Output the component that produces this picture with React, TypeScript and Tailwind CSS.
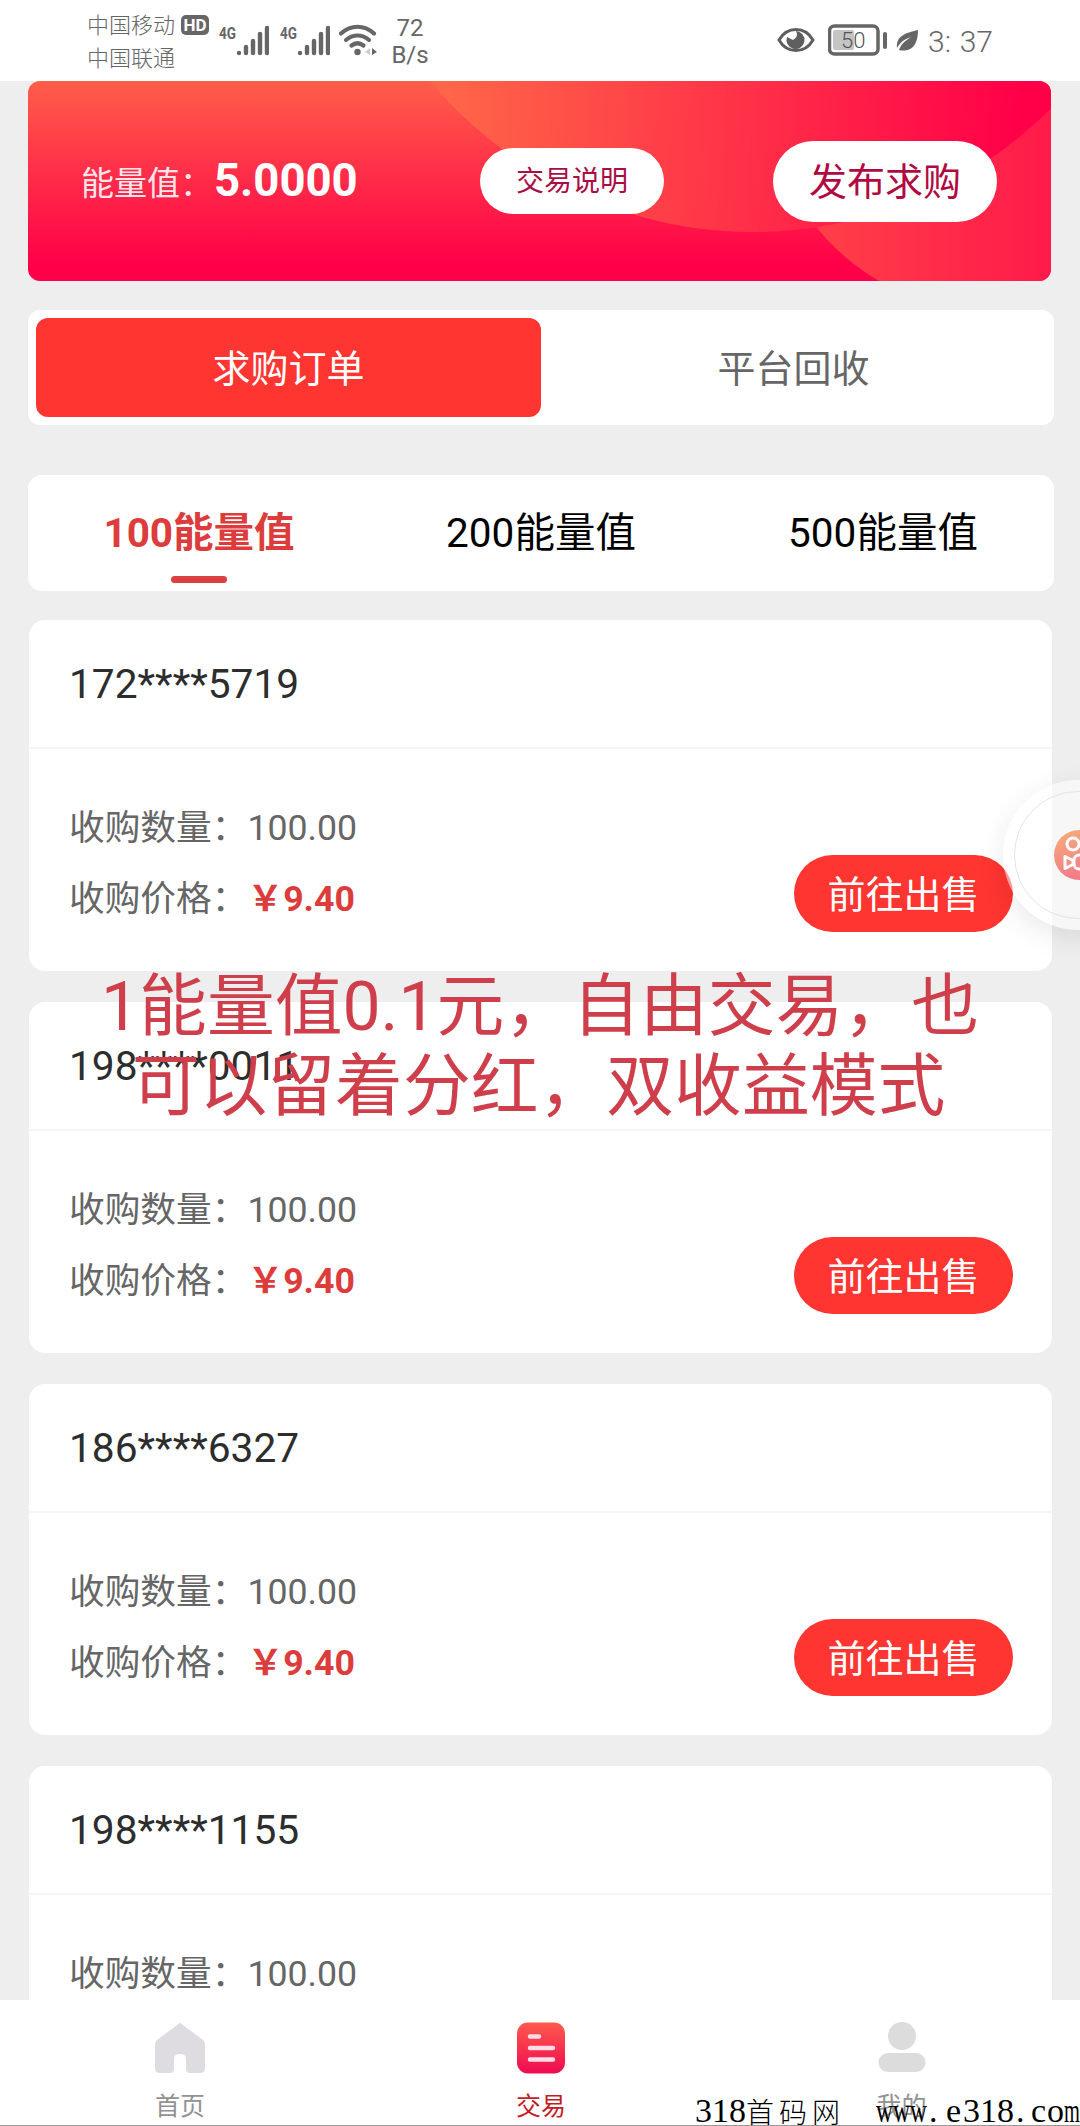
const orders = [
  { phone: "172****5719", amount: "100.00", price: "9.40" },
  { phone: "198****0011", amount: "100.00", price: "9.40" },
  { phone: "186****6327", amount: "100.00", price: "9.40" },
  { phone: "198****1155", amount: "100.00", price: "9.40" },
];

function Signal() {
  return (
    <svg className="w-[50px] h-[32px]" viewBox="0 0 50 32" fill="none">
      <text x="0" y="15" fontSize="17" fontWeight="700" fill="#666" textLength="17" lengthAdjust="spacingAndGlyphs">4G</text>
      <g stroke="#666" strokeWidth="4.4" strokeLinecap="round">
        <path d="M20 29v.1M27 23v6M34 17v12M41 10v19M48 4v25" />
      </g>
    </svg>
  );
}

function StatusBar() {
  return (
    <header className="h-[81px] shrink-0 bg-white flex justify-between pl-[87px] pr-[87px] text-[#666]">
      <div className="flex">
        <div className="w-[92px] pt-[9px] text-[22px] leading-[33px] font-light">
          <p>中国移动</p>
          <p>中国联通</p>
        </div>
        <div className="mt-[15px] ml-[2px] w-[28px] h-[20px] rounded-[5px] bg-[#666] text-white text-[17px] leading-[20px] font-bold text-center">HD</div>
        <div className="mt-[24px] ml-[10px]"><Signal /></div>
        <div className="mt-[24px] ml-[11px]"><Signal /></div>
        <svg className="mt-[24px] ml-[9px] w-[40px] h-[32px]" viewBox="0 0 40 32" fill="none" stroke="#666" strokeWidth="4.2">
          <path d="M2 9.5C12 .5 25 .5 35 9.5" strokeLinecap="round" />
          <path d="M7 16c7-6 16-6 23 0" strokeLinecap="round" />
          <path d="M12.500 21.500c4-3 8-3 12 0" strokeLinecap="round" />
          <circle cx="18.500" cy="28" r="3.200" fill="#666" stroke="none" />
          <path d="M31 24v7l-5-3z" fill="#ccc" stroke="none" />
          <path d="M33 24v7l5-3z" fill="#666" stroke="none" />
        </svg>
        <div className="mt-[15px] ml-[11px] w-[40px] text-center text-[24px] leading-[27px]">
          <p>72</p>
          <p>B/s</p>
        </div>
      </div>
      <div className="flex">
        <svg className="mt-[27px] -ml-[1px] w-[38px] h-[26px]" viewBox="0 0 38 26">
          <path d="M2 13C10-1 28-1 36 13 28 27 10 27 2 13z" fill="none" stroke="#5f5f5f" strokeWidth="3" />
          <path d="M19 4a9 9 0 1 1-9 6l6 3q6-3 3-9z" fill="#5f5f5f" />
        </svg>
        <svg className="mt-[24px] ml-[13px] w-[62px] h-[32px]" viewBox="0 0 62 32">
          <rect x="1.500" y="2" width="48.500" height="28" rx="5" fill="none" stroke="#666" strokeWidth="3.500" />
          <rect x="5" y="6" width="21" height="20" rx="2" fill="#c4c4c4" />
          <rect x="55" y="8" width="4" height="17" rx="2" fill="#666" />
          <text x="13" y="23.500" fontSize="22" fontWeight="300" fill="#555">50</text>
        </svg>
        <svg className="mt-[29px] ml-[6px] w-[23px] h-[24px]" viewBox="0 0 23 24">
          <path d="M22 1C9 4 0 7 1 19c5-8 9-9 14-11C9 12 5 15 3 21c9 2 19-1 19-20z" fill="#666" />
        </svg>
        <div className="mt-[26px] ml-[9px] text-[30px] leading-[32px] font-light flex w-[65px] justify-between">
          <span>3:</span>
          <span>37</span>
        </div>
      </div>
    </header>
  );
}

function Banner() {
  return (
    <section className="relative ml-[28px] w-[1023px] h-[200px] shrink-0 rounded-[12px] overflow-hidden bg-linear-to-b/srgb from-[#ff5d49] to-[#ff0048] to-92%">
      <svg className="absolute inset-0" width="1023" height="200" viewBox="28 81 1023 200">
        <defs>
          <linearGradient id="big" gradientUnits="userSpaceOnUse" x1="450" y1="90" x2="1020" y2="130">
            <stop offset="0" stopColor="#ff6548" />
            <stop offset="1" stopColor="#ff0048" />
          </linearGradient>
          <linearGradient id="small" gradientUnits="userSpaceOnUse" x1="800" y1="200" x2="1051" y2="200">
            <stop offset="0" stopColor="#ff4248" />
            <stop offset="1" stopColor="#ff1a4a" />
          </linearGradient>
        </defs>
        <circle cx="985" cy="95" r="214" fill="url(#small)" />
        <circle cx="753" cy="-189" r="421" fill="url(#big)" />
      </svg>
      <div className="relative h-full flex items-center pl-[53px] text-white">
        <span className="text-[33px] w-[133px] shrink-0 whitespace-nowrap text-[#ffe4ea] pt-[6px]">能量值：</span>
        <span className="text-[45.500px] font-bold w-[266px] shrink-0">5.0000</span>
        <button className="w-[184px] h-[66px] pt-[2px] rounded-full bg-white text-[28px] text-[#a80f45]">交易说明</button>
        <button className="ml-[109px] w-[224px] h-[81px] pt-[3px] rounded-full bg-white text-[38px] text-[#b00a42]">发布求购</button>
      </div>
    </section>
  );
}

function OrderCard({ phone, amount, price }: { phone: string; amount: string; price: string }) {
  return (
    <article className="ml-[29px] w-[1023px] h-[351px] shrink-0 rounded-[16px] bg-white">
      <div className="h-[129px] pt-[2px] border-b-2 border-[#f5f5f5] flex items-center pl-[40px] text-[40.700px] text-[#2d2d2d]">{phone}</div>
      <div className="flex justify-between pl-[40px] pr-[39px] pt-[44px] text-[35.700px] text-[#666]">
        <div>
          <p className="h-[71px] leading-[71px]">收购数量：{amount}</p>
          <p className="h-[71px] leading-[71px]">
            收购价格：<span className="font-bold text-[#dc3c3c]">￥{price}</span>
          </p>
        </div>
        <button className="mt-[62px] w-[219px] h-[77px] pt-[3px] rounded-full bg-[#ff3531] text-[38px] text-white">前往出售</button>
      </div>
    </article>
  );
}

function NavBar() {
  return (
    <nav className="relative h-[126px] shrink-0 bg-white border-b border-[#999] grid grid-cols-3 text-[25px] leading-[30px] text-[#929292]">
      <div className="flex flex-col items-center pt-[22px]">
        <svg className="w-[50px] h-[52px]" viewBox="0 0 50 52">
          <path d="M25 .8 48 18q2 2 2 5v23q0 5-5 5H35q-4 0-4-4V37q0-5-6-5t-6 5v10q0 4-4 4H5q-5 0-5-5V23q0-3 2-5z" fill="#dedce0" />
        </svg>
        <span className="mt-[18px]">首页</span>
      </div>
      <div className="flex flex-col items-center pt-[22px] pl-[2px] text-[#c41c25]">
        <svg className="w-[50px] h-[52px]" viewBox="0 0 50 52">
          <defs>
            <linearGradient id="trade" x1="0" y1="0" x2="0" y2="1">
              <stop offset="0" stopColor="#ff5a4d" />
              <stop offset="1" stopColor="#ee0a50" />
            </linearGradient>
          </defs>
          <rect x="1" y="0.500" width="48" height="51" rx="11" fill="url(#trade)" />
          <path d="M14 14.500h9M14 26h23M14 37.500h23" stroke="#ffdce5" strokeWidth="4.500" strokeLinecap="round" />
        </svg>
        <span className="mt-[18px]">交易</span>
      </div>
      <div className="flex flex-col items-center pt-[22px] pl-[3px]">
        <svg className="w-[50px] h-[52px]" viewBox="0 0 50 52" fill="#dcdcdc">
          <circle cx="25" cy="14" r="14" />
          <rect x="1.500" y="31" width="47" height="19" rx="9.500" />
        </svg>
        <span className="mt-[18px]">我的</span>
      </div>
    </nav>
  );
}

// Round quick-launch button that sticks out of the right edge
function FloatingButton() {
  return (
    <div className="absolute left-[1003px] top-[780px] w-[150px] h-[150px] rounded-full bg-white/50 shadow-[0_8px_28px_rgba(0,0,0,0.09)]">
      <div className="absolute inset-[11px] rounded-full border border-[#e4e4e4]"></div>
      <svg className="absolute left-[51px] top-[50px]" width="50" height="50" viewBox="0 0 50 50">
        <defs>
          <linearGradient id="float" x1="0" y1="0" x2="0.300" y2="1">
            <stop offset="0" stopColor="#f6ae78" />
            <stop offset="1" stopColor="#f27c8a" />
          </linearGradient>
        </defs>
        <circle cx="25" cy="25" r="25" fill="url(#float)" />
        <g fill="none" stroke="#fff" strokeWidth="3" strokeLinejoin="round">
          <circle cx="19" cy="14" r="6" />
          <circle cx="34" cy="14" r="6" />
          <path d="M11 26.500v12l8-4v-4z" />
          <rect x="20" y="25" width="20" height="14" rx="5" />
        </g>
      </svg>
    </div>
  );
}

export default function App() {
  return (
    <div className="relative w-[1080px] h-[2126px] overflow-hidden flex flex-col bg-[#eeeeee] font-['Roboto','Noto_Sans_CJK_SC',sans-serif]">
      <StatusBar />
      <main className="flex-1 min-h-0 overflow-hidden flex flex-col">
        <Banner />

        <div className="ml-[28px] mt-[29px] w-[1026px] h-[115px] shrink-0 rounded-[12px] bg-white p-[8px] grid grid-cols-2 text-[38px]">
          <button className="pt-[4px] rounded-[12px] bg-[#ff3531] text-white">求购订单</button>
          <button className="pt-[4px] text-[#666]">平台回收</button>
        </div>

        <div className="ml-[28px] mt-[50px] mb-[29px] w-[1026px] h-[116px] shrink-0 rounded-[14px] bg-white grid grid-cols-3 text-[40.500px] leading-[58px] text-center text-black">
          <div className="pt-[29px] flex flex-col items-center">
            <span className="font-bold text-[#dc3c3c]">100能量值</span>
            <div className="mt-[14px] w-[56px] h-[7px] rounded-full bg-[#dc4040]"></div>
          </div>
          <div className="pt-[29px]">200能量值</div>
          <div className="pt-[29px]">500能量值</div>
        </div>

        <div className="flex flex-col gap-[31px]">
          {orders.map((order) => (
            <OrderCard key={order.phone} {...order} />
          ))}
        </div>
      </main>
      <NavBar />

      <FloatingButton />

      <div className="absolute left-0 top-[967px] w-[1080px] text-center text-[67.800px] leading-[80px] text-[#cf3f4b] whitespace-nowrap">
        <p>1能量值0.1元，自由交易，也</p>
        <p className="pr-[3px]">可以留着分红，双收益模式</p>
      </div>

      <div className="absolute left-[695px] top-[2092px] w-[385px] h-[34px] flex text-[34px] leading-[38px] text-black whitespace-nowrap font-['Liberation_Serif','Noto_Sans_CJK_SC',serif]">
        <span className="w-[51px]">318</span>
        <span className="w-[130px] text-[28px] tracking-[5px] font-light font-['Noto_Sans_CJK_SC',sans-serif]">首码网</span>
        <span className="w-[51px]"><span className="inline-block origin-left scale-x-[0.69]">www</span></span>
        <span className="w-[19px] pl-[2px]">.</span>
        <span className="w-[17px]">e</span>
        <span className="w-[51px]">318</span>
        <span className="w-[17px] pl-[2px]">.</span>
        <span className="w-[16px]">c</span>
        <span className="w-[17px]">o</span>
        <span className="w-[16px]"><span className="inline-block origin-left scale-x-[0.6]">m</span></span>
      </div>
    </div>
  );
}
